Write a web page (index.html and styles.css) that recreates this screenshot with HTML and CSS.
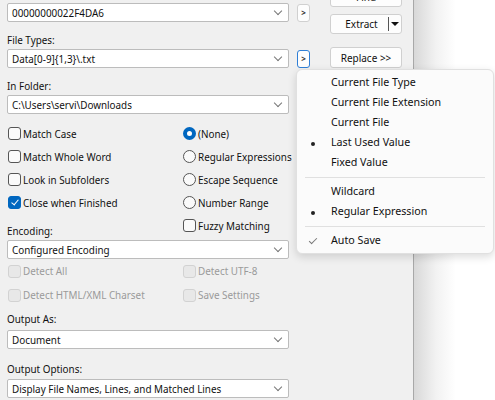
FILE: index.html
```html
<!DOCTYPE html>
<html lang="en">
<head>
    <meta charset="UTF-8">
    <title>Find Options</title>
    <link rel="stylesheet" href="styles.css">
</head>
<body>
    <div class="window">
        <div class="panel">
            <div class="main">
                <div class="combo-row first">
                    <div class="combo"><span>00000000022F4DA6</span><i class="chev"></i></div>
                    <button class="mini">&gt;</button>
                </div>

                <div class="label">File Types:</div>
                <div class="combo-row">
                    <div class="combo"><span>Data[0-9]{1,3}\.txt</span><i class="chev"></i></div>
                    <button class="mini focus">&gt;</button>
                </div>

                <div class="label">In Folder:</div>
                <div class="combo-row">
                    <div class="combo"><span>C:\Users\servi\Downloads</span><i class="chev"></i></div>
                </div>

                <div class="options">
                    <div class="opt"><span class="box"></span>Match Case</div>
                    <div class="opt"><span class="radio on"></span>(None)</div>
                    <div class="opt"><span class="box"></span>Match Whole Word</div>
                    <div class="opt"><span class="radio"></span>Regular Expressions</div>
                    <div class="opt"><span class="box"></span>Look in Subfolders</div>
                    <div class="opt"><span class="radio"></span>Escape Sequence</div>
                    <div class="opt"><span class="box on"></span>Close when Finished</div>
                    <div class="opt"><span class="radio"></span>Number Range</div>
                    <div class="opt enc">Encoding:</div>
                    <div class="opt"><span class="box"></span>Fuzzy Matching</div>
                </div>

                <div class="combo enc-combo"><span>Configured Encoding</span><i class="chev"></i></div>

                <div class="options disabled">
                    <div class="opt"><span class="box"></span>Detect All</div>
                    <div class="opt"><span class="box"></span>Detect UTF-8</div>
                    <div class="opt"><span class="box"></span>Detect HTML/XML Charset</div>
                    <div class="opt"><span class="box"></span>Save Settings</div>
                </div>

                <div class="label out-as">Output As:</div>
                <div class="combo"><span>Document</span><i class="chev"></i></div>

                <div class="label out-opt">Output Options:</div>
                <div class="combo"><span>Display File Names, Lines, and Matched Lines</span><i class="chev"></i></div>
            </div>

            <div class="side">
                <button class="btn find">Find</button>
                <div class="btn split"><span>Extract</span><i class="drop"></i></div>
                <button class="btn replace">Replace &gt;&gt;</button>
            </div>
        </div>
        <div class="outside"></div>

        <div class="menu">
            <div class="item">Current File Type</div>
            <div class="item">Current File Extension</div>
            <div class="item">Current File</div>
            <div class="item dot">Last Used Value</div>
            <div class="item">Fixed Value</div>
            <div class="sep"></div>
            <div class="item">Wildcard</div>
            <div class="item dot">Regular Expression</div>
            <div class="sep"></div>
            <div class="item check">Auto Save</div>
        </div>
    </div>
</body>
</html>
```

FILE: styles.css
```css
body {
    margin: 0;
    font-family: "Noto Sans", sans-serif;
    font-size: 9.9px;
    color: #111;
    background-color: #fff;
}
.window {
    position: relative;
    display: flex;
    height: 400px;
    overflow: hidden;
}
.panel {
    display: flex;
    width: 414px;
    background-color: #f0f0f0;
    border-right: 1px solid #a8a8a8;
    box-sizing: border-box;
}
.outside {
    flex: 1;
    background: linear-gradient(to right, #d8d8d8, #f2f2f2 22px, #fff 42px);
}
.main {
    width: 303px;
    margin-left: 7px;
}
.combo-row {
    display: flex;
    align-items: center;
    gap: 8px;
}
.combo-row.first {
    margin-top: 3px;
}
.combo {
    display: flex;
    align-items: center;
    width: 282px;
    height: 19px;
    background-color: #fff;
    border: 1px solid #bcbcbc;
    border-radius: 2px;
    box-sizing: border-box;
    padding-left: 4px;
    padding-right: 7px;
}
.combo span {
    flex: 1;
    white-space: nowrap;
}
.chev {
    width: 5px;
    height: 5px;
    border-right: 1px solid #777;
    border-bottom: 1px solid #777;
    transform: rotate(45deg);
    margin-top: -4px;
}
.mini {
    width: 13px;
    height: 18px;
    padding: 0;
    font-family: inherit;
    font-size: 8px;
    font-weight: bold;
    color: #333;
    background-color: #fdfdfd;
    border: 1px solid #d0d0d0;
    border-radius: 3px;
}
.mini.focus {
    border-color: #2f7fd6;
}
.label {
    height: 16px;
    line-height: 16px;
    margin-top: 10px;
    margin-bottom: 1px;
}
.options {
    display: grid;
    grid-template-columns: 175px 1fr;
    grid-auto-rows: 23px;
    margin-top: 8px;
}
.opt {
    display: flex;
    align-items: center;
    white-space: nowrap;
}
.opt.enc {
    align-self: end;
    height: 16px;
    margin-bottom: -2px;
}
.box,
.radio {
    flex: none;
    width: 13px;
    height: 13px;
    box-sizing: border-box;
    border: 1px solid #555;
    background-color: #fafafa;
    margin-left: 1px;
    margin-right: 2px;
}
.box {
    border-radius: 3px;
}
.radio {
    border-radius: 50%;
}
.box.on {
    position: relative;
    background-color: #0067c0;
    border-color: #0067c0;
}
.box.on::after {
    content: "";
    position: absolute;
    left: 4px;
    top: 1px;
    width: 3px;
    height: 6px;
    border-right: 1px solid #fff;
    border-bottom: 1px solid #fff;
    transform: rotate(40deg);
}
.radio.on {
    border: 4px solid #0067c0;
    background-color: #fff;
}
.enc-combo {
    margin-top: 3px;
}
.disabled {
    grid-auto-rows: 24px;
    margin-top: 0;
    color: #9a9a9a;
}
.disabled .box {
    border-color: #d2d2d2;
    background-color: #e8e8e8;
}
.label.out-as {
    margin-top: 4px;
    margin-bottom: 3px;
}
.label.out-opt {
    margin-top: 12px;
    margin-bottom: 2px;
}
.side {
    width: 72px;
    margin-left: 20px;
    margin-top: -13px;
}
.btn {
    display: block;
    width: 72px;
    height: 20px;
    padding: 0;
    font-family: inherit;
    font-size: 10px;
    color: #111;
    background-color: #fdfdfd;
    border: 1px solid #d0d0d0;
    border-radius: 3px;
    box-sizing: border-box;
}
.split {
    display: flex;
    align-items: center;
    margin-top: 7px;
}
.split span {
    flex: 1;
    text-align: center;
    padding-left: 4px;
}
.drop {
    width: 12px;
    height: 14px;
    border-left: 1px solid #555;
    position: relative;
}
.drop::after {
    content: "";
    position: absolute;
    left: 2px;
    top: 5px;
    border-left: 4px solid transparent;
    border-right: 4px solid transparent;
    border-top: 4px solid #111;
}
.replace {
    margin-top: 13px;
    height: 21px;
}
.menu {
    position: absolute;
    left: 296px;
    top: 69px;
    width: 198px;
    padding: 3px 0 2px;
    background-color: #fbfbfb;
    border: 1px solid #e0e0e0;
    border-radius: 6px;
    box-shadow: 0 3px 8px rgba(0, 0, 0, 0.14);
    box-sizing: border-box;
    font-size: 10.7px;
}
.item {
    position: relative;
    height: 20px;
    line-height: 19px;
    padding-left: 34px;
    color: #111;
}
.item.dot::before {
    content: "";
    position: absolute;
    left: 14px;
    top: 9px;
    width: 4px;
    height: 4px;
    border-radius: 50%;
    background-color: #222;
}
.item.check::before {
    content: "";
    position: absolute;
    left: 14px;
    top: 5px;
    width: 3px;
    height: 7px;
    border-right: 1px solid #777;
    border-bottom: 1px solid #777;
    transform: rotate(45deg);
}
.sep {
    height: 1px;
    margin: 4px 8px 4px 8px;
    background-color: #e0e0e0;
}
```
